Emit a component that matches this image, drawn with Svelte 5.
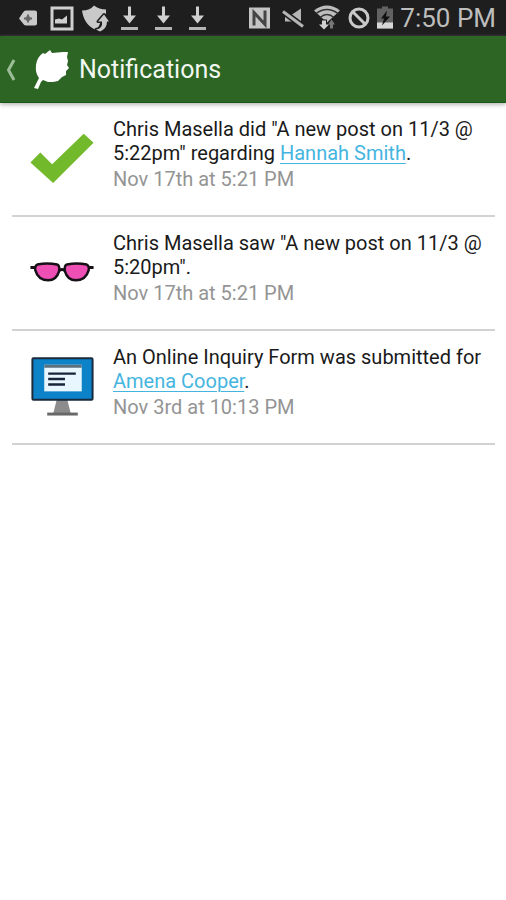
<script>
    const downloads = [1, 2, 3]

    let notifications = [
        {
            icon: "check",
            before: 'Chris Masella did "A new post on 11/3 @ 5:22pm" regarding ',
            person: "Hannah Smith",
            date: "Nov 17th at 5:21 PM"
        },
        {
            icon: "glasses",
            before: 'Chris Masella saw "A new post on 11/3 @ 5:20pm"',
            person: "",
            date: "Nov 17th at 5:21 PM"
        },
        {
            icon: "monitor",
            before: "An Online Inquiry Form was submitted for ",
            person: "Amena Cooper",
            date: "Nov 3rd at 10:13 PM"
        }
    ]
</script>

<div class="status">
    <div class="group">
        <svg viewBox="0 0 34 35" aria-hidden="true">
            <path d="M8 18 12 12Q13 10 15 10H24Q26 10 26 12V23Q26 25 24 25H15Q13 25 12 23Z" fill="#c9c9c9" />
            <path d="M17 14v8M13 18h8" stroke="#666" stroke-width="2" />
            <circle cx="17" cy="18" r="2.500" fill="#666" />
        </svg>
        <svg viewBox="0 0 34 35" aria-hidden="true">
            <rect x="7" y="7.500" width="20" height="21" fill="none" stroke="#cfcfcf" stroke-width="3" />
            <path d="M10 23V19L14 18 17 19 22 15V23Z" fill="#cfcfcf" />
        </svg>
        <svg viewBox="0 0 34 35" aria-hidden="true">
            <path d="M3 10Q11 10 15 5Q20 9 27 9V13L21 19V23L18 30Q5 25 3 10Z" fill="#c9c9c9" />
            <path d="M17 29Q24 28 23 21H19L25 14 30 21H28Q28 28 21 31Z" fill="#c9c9c9" stroke="#1e1e1e" stroke-width="3" stroke-linejoin="round" paint-order="stroke" />
        </svg>
        {#each downloads as d (d)}
            <svg viewBox="0 0 34 35" aria-hidden="true">
                <path d="M15 6H18V15H23L16.500 23 10 15H15Z" fill="#cfcfcf" />
                <path d="M8 28H25" stroke="#b5b5b5" stroke-width="3" />
            </svg>
        {/each}
    </div>
    <div class="group">
        <svg viewBox="0 0 34 35" aria-hidden="true">
            <rect x="7" y="7" width="21" height="21" fill="#c4c4c4" />
            <path d="M12 25V12L23 24V10" fill="none" stroke="#444" stroke-width="3" />
        </svg>
        <svg viewBox="0 0 34 35" aria-hidden="true">
            <path d="M9 14H16L25 8V26L17 21H9Z" fill="#b5b5b5" />
            <path d="M7 11 27 26" stroke="#1e1e1e" stroke-width="6" />
            <path d="M7 11 27 26" stroke="#b5b5b5" stroke-width="3" />
        </svg>
        <svg viewBox="0 0 34 35" aria-hidden="true">
            <path d="M4 10Q17 0 30 10L17 22Z" fill="#bdbdbd" />
            <path d="M6 13Q17 5 28 13M10 17Q17 11 24 17" fill="none" stroke="#333" stroke-width="1.500" />
            <path d="M12 20H16V24H19L14 29 9 24H12Z" fill="#d0d0d0" stroke="#1e1e1e" stroke-width="2" paint-order="stroke" />
            <path d="M20 28V24H18L21.500 19 25 24H23V28Z" fill="#777" />
        </svg>
        <svg class="block" viewBox="0 0 30 35" aria-hidden="true">
            <circle cx="15" cy="17.500" r="9" fill="none" stroke="#c9c9c9" stroke-width="3" />
            <path d="M8.500 11 21.500 24" stroke="#c9c9c9" stroke-width="3" />
        </svg>
        <svg class="battery" viewBox="0 0 22 35" aria-hidden="true">
            <path d="M3 8H8V6H14V8H19V28H3Z" fill="#626262" />
            <path d="M3 22H19V28H3Z" fill="#d6d6d6" />
            <path d="M13 10 7 18H10L8 25 16 16H12Z" fill="#111" />
        </svg>
        <time>7:50 PM</time>
    </div>
</div>

<header>
    <button aria-label="Back">
        <svg viewBox="0 0 12 24" aria-hidden="true">
            <path d="M9 2 3.500 12 9 22" fill="none" stroke="#9dbd98" stroke-width="3" />
        </svg>
    </button>
    <svg class="leaf" viewBox="0 0 38 42" aria-hidden="true">
        <path d="M18 1 20 4 31 3 36 3 35 8 36 12 35 16 37 19 34 22 34 26 30 28 26 32 21 33 16 33 11 31 9 33 6 40 2 39 7 29Q3 24 4 16Q5 8 11 4L13 5Z" fill="#fff" />
    </svg>
    <h1>Notifications</h1>
</header>

<main>
    <ul>
        {#each notifications as item}
            <li>
                <svg class="picture" viewBox="0 0 64 74" aria-hidden="true">
                    {#if item.icon == "check"}
                        <path d="M0 46 10 36 22 48 54 17 64 26 23 67Z" fill="#72b92b" />
                    {:else if item.icon == "glasses"}
                        <g transform="translate(0 -5)">
                            <path d="M0 42H5M59 42H64M29 45Q32 43 35 45" fill="none" stroke="#171117" stroke-width="3" />
                            <path d="M7 39Q17 37 27 39Q30 40 29 46C27 53 23 55 18 55C11 55 7 52 5 45Q4 41 7 39Z" fill="#ee4fb5" stroke="#171117" stroke-width="2.500" />
                            <path d="M57 39Q47 37 37 39Q34 40 35 46C37 53 41 55 46 55C53 55 57 52 59 45Q60 41 57 39Z" fill="#ee4fb5" stroke="#171117" stroke-width="2.500" />
                        </g>
                    {:else}
                        <g transform="translate(0 -1)">
                            <path d="M27 55H37L41 71H23Z" fill="#8c8c8c" />
                            <path d="M17 71H48" stroke="#686868" stroke-width="3" />
                            <rect x="2" y="14.500" width="61" height="42" rx="1" fill="#0c82c8" stroke="#192a3c" stroke-width="2" />
                            <rect x="14" y="21" width="38" height="27" fill="#e8f7ff" />
                            <path d="M14 22.500H52" stroke="#5b7180" stroke-width="3" />
                            <path d="M18 30H46M18 35.500H35M18 41H35" stroke="#182437" stroke-width="2.500" />
                        </g>
                    {/if}
                </svg>
                <div class="details">
                    <p>{item.before}{#if item.person}<a href="#person">{item.person}</a>{/if}.</p>
                    <p class="date">{item.date}</p>
                </div>
            </li>
        {/each}
    </ul>
</main>

<style>
    :global(body) {
        margin: 0;
        background: #fff;
        font-family: Roboto, "Liberation Sans", sans-serif;
    }
    .status {
        display: flex;
        justify-content: space-between;
        height: 36px;
        padding: 0 10px 0 11px;
        background: #1e1e1e;
    }
    .group {
        display: flex;
        align-items: center;
    }
    .group svg {
        width: 34px;
        height: 36px;
    }
    .group .block {
        width: 30px;
    }
    .group .battery {
        width: 22px;
    }
    time {
        margin-left: 4px;
        color: #bdbdbd;
        font-size: 26px;
        line-height: 36px;
        white-space: nowrap;
    }
    header {
        display: flex;
        align-items: center;
        height: 67px;
        padding-top: 2px;
        background: #2c6524;
        border-bottom: 1px solid #1d5718;
        box-sizing: border-box;
        box-shadow: 0 2px 4px #bbb;
    }
    button {
        display: flex;
        width: 32px;
        height: 48px;
        padding: 0 0 0 5px;
        align-items: center;
        border: 0;
        background: none;
        cursor: pointer;
    }
    button svg {
        width: 12px;
        height: 24px;
    }
    .leaf {
        width: 38px;
        height: 42px;
    }
    h1 {
        margin: 0 0 0 9px;
        color: #f3f7f2;
        font-size: 25px;
        font-weight: 400;
        line-height: 32px;
    }
    ul {
        margin: 0;
        padding: 0 11px 0 12px;
        list-style: none;
    }
    li {
        display: flex;
        gap: 19px;
        padding: 14px 0 24px 18px;
        border-bottom: 2px solid #d2d2d2;
    }
    .picture {
        flex: none;
        width: 64px;
        height: 73px;
    }
    .details {
        flex: 1;
    }
    p {
        margin: 0;
        color: #1a1a1a;
        font-size: 20px;
        line-height: 24px;
    }
    .date {
        margin-top: 2px;
        color: #949494;
    }
    a {
        color: #45b5df;
        text-decoration-thickness: 1px;
        text-underline-offset: 3px;
    }
</style>
